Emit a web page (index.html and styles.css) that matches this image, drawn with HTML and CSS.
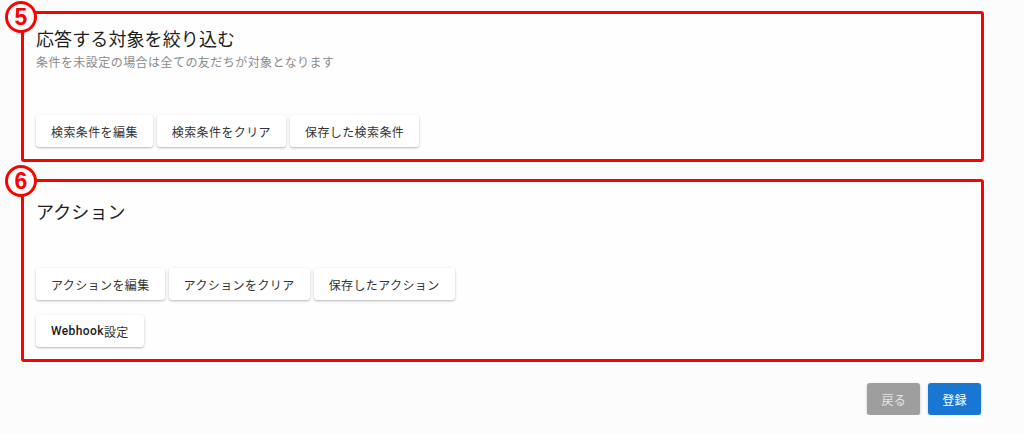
FILE: index.html
```html
<!DOCTYPE html>
<html lang="ja">
<head>
<meta charset="utf-8">
<title>応答設定</title>
<link rel="stylesheet" href="styles.css">
</head>
<body>
<div class="page">
  <section class="box box-filter">
    <span class="badge badge-5">5</span>
    <h2 class="box-title">応答する対象を絞り込む</h2>
    <p class="box-sub">条件を未設定の場合は全ての友だちが対象となります</p>
    <div class="btn-rows rows-filter">
      <div class="btn-row">
        <button class="btn">検索条件を編集</button>
        <button class="btn">検索条件をクリア</button>
        <button class="btn">保存した検索条件</button>
      </div>
    </div>
  </section>

  <section class="box box-action">
    <span class="badge badge-6">6</span>
    <h2 class="box-title">アクション</h2>
    <div class="btn-rows rows-action">
      <div class="btn-row">
        <button class="btn">アクションを編集</button>
        <button class="btn">アクションをクリア</button>
        <button class="btn">保存したアクション</button>
      </div>
      <div class="btn-row">
        <button class="btn"><span class="latin">Webhook</span>設定</button>
      </div>
    </div>
  </section>

  <div class="footer">
    <button class="fbtn fbtn-back">戻る</button>
    <button class="fbtn fbtn-save">登録</button>
  </div>
</div>
</body>
</html>
```

FILE: styles.css
```css
* { box-sizing: border-box; }

html, body {
  margin: 0;
  padding: 0;
  background: #fcfcfc;
}

body {
  font-family: Roboto, "Noto Sans CJK JP", sans-serif;
  color: #222;
}

.page {
  padding: 11px 40px 0 21px;
  display: flex;
  flex-direction: column;
}

.box {
  position: relative;
  border: 3px solid #ff0000;
  border-radius: 3px;
  background: #fefefe;
  padding: 0 12px 12px 12px;
}

.box-action {
  margin-top: 17px;
}

.badge {
  position: absolute;
  width: 32px;
  height: 32px;
  left: -19px;
  border: 3px solid #ff0000;
  border-radius: 50%;
  background: #fff;
  color: #ff0000;
  font-family: "Liberation Sans", Arial, sans-serif;
  font-weight: 700;
  font-size: 23px;
  line-height: 26px;
  text-align: center;
}

.badge-5 { top: -13px; }
.badge-6 { top: -17px; }

.box-title {
  margin: 0;
  font-family: "Noto Sans CJK JP", sans-serif;
  font-size: 18px;
  font-weight: 400;
  line-height: 26px;
  letter-spacing: 0.1px;
  color: #1e1e1e;
}

.box-filter .box-title { margin-top: 11px; }
.box-action .box-title { margin-top: 16px; }

.box-sub {
  margin: 2px 0 0;
  font-family: "Noto Sans CJK JP", sans-serif;
  font-size: 12px;
  letter-spacing: 0.45px;
  line-height: 18px;
  color: #8a8a8a;
}

.btn-rows {
  display: flex;
  flex-direction: column;
  gap: 15px;
}

.rows-filter { margin-top: 44px; }
.rows-action { margin-top: 44px; }

.btn-row {
  display: flex;
  gap: 4px;
}

.btn {
  height: 32px;
  padding: 0 15px;
  border: none;
  border-radius: 3px;
  background: #fff;
  box-shadow: 0 1px 3px rgba(0, 0, 0, 0.22), 0 1px 1px rgba(0, 0, 0, 0.08);
  font-family: "Noto Sans CJK JP", sans-serif;
  font-size: 12px;
  letter-spacing: 0.4px;
  color: #333;
  display: inline-flex;
  align-items: center;
}

.latin {
  font-family: Roboto, sans-serif;
  font-weight: 500;
  color: #1a1a1a;
}

.footer {
  display: flex;
  justify-content: flex-end;
  gap: 8px;
  margin: 21px 3px 0 0;
}

.fbtn {
  height: 32px;
  padding: 0 14px;
  border: none;
  border-radius: 3px;
  font-family: "Noto Sans CJK JP", sans-serif;
  font-size: 12px;
  letter-spacing: 0.4px;
  box-shadow: 0 1px 3px rgba(0, 0, 0, 0.2);
}

.fbtn-back {
  background: #9e9e9e;
  color: #e6e6e6;
}

.fbtn-save {
  background: #1976d2;
  color: #fff;
}
```
